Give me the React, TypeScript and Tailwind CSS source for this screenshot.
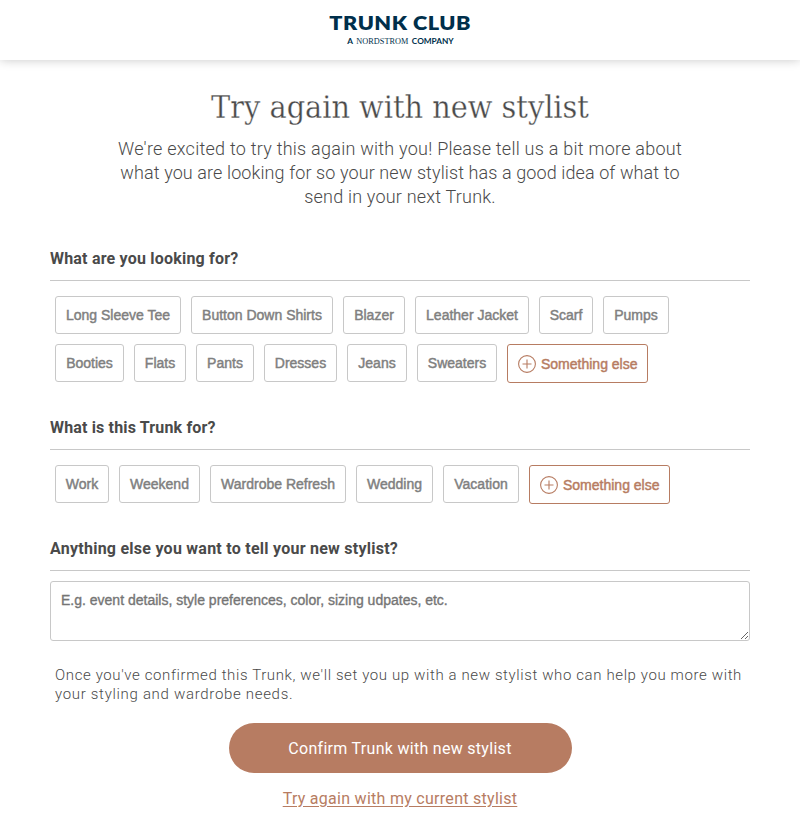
import React from "react";

type Chip = { label: string; width: string };

const items: Chip[][] = [
  [
    { label: "Long Sleeve Tee", width: "w-[126px]" },
    { label: "Button Down Shirts", width: "w-[142px]" },
    { label: "Blazer", width: "w-[62px]" },
    { label: "Leather Jacket", width: "w-[114px]" },
    { label: "Scarf", width: "w-[54px]" },
    { label: "Pumps", width: "w-[66px]" },
  ],
  [
    { label: "Booties", width: "w-[69px]" },
    { label: "Flats", width: "w-[52px]" },
    { label: "Pants", width: "w-[58px]" },
    { label: "Dresses", width: "w-[73px]" },
    { label: "Jeans", width: "w-[60px]" },
    { label: "Sweaters", width: "w-[80px]" },
  ],
];

const occasions: Chip[] = [
  { label: "Work", width: "w-[54px]" },
  { label: "Weekend", width: "w-[81px]" },
  { label: "Wardrobe Refresh", width: "w-[136px]" },
  { label: "Wedding", width: "w-[77px]" },
  { label: "Vacation", width: "w-[76px]" },
];

function ChipButton({ label, width }: Chip) {
  return (
    <button
      className={`${width} h-[38px] shrink-0 whitespace-nowrap rounded-[3px] border border-[#c8c8c8] bg-white text-center text-[14px] leading-[36px] text-[#808080] [-webkit-text-stroke:0.45px_#808080]`}
    >
      {label}
    </button>
  );
}

function SomethingElse() {
  return (
    <button className="flex h-[39px] w-[141px] shrink-0 items-center rounded-[3px] border border-[#b77c62] bg-white pl-[10px] text-[14px] text-[#b77c62] [-webkit-text-stroke:0.45px_#b77c62]">
      <svg width="18" height="18" viewBox="0 0 18 18" fill="none" stroke="#b77c62" className="mr-[5px] shrink-0">
        <circle cx="9" cy="9" r="8.4" strokeWidth="1.1" />
        <path d="M4.5 9h9M9 4.5v9" strokeWidth="1.1" />
      </svg>
      <span className="whitespace-nowrap pt-[2px]">Something else</span>
    </button>
  );
}

function SectionTitle({ children, spacing }: { children: React.ReactNode; spacing: string }) {
  return (
    <h2 className="h-[33px] border-b border-[#c8c8c8] pt-px font-[Roboto,sans-serif] text-[16px] font-bold leading-[20px] text-[#4a4a4a]">
      <span className={spacing}>{children}</span>
    </h2>
  );
}

export default function App() {
  return (
    <div className="h-[833px] w-[800px] overflow-hidden bg-white font-['Liberation_Sans',Arial,sans-serif]">
      <header className="flex h-[60px] flex-col items-center bg-white text-[#002f4b] shadow-[0_0_10px_rgba(0,0,0,0.22)]">
        <div className="mt-[12px] scale-x-[1.14] whitespace-nowrap font-[Lato,sans-serif] text-[19px] font-extrabold leading-[22px]">
          <span className="-mr-[0.5px] tracking-[0.45px]">TRUNK CLUB</span>
        </div>
        <div className="mt-[3px] flex scale-x-[1.1] gap-[3px] whitespace-nowrap font-[Lato,sans-serif] text-[7.5px] font-bold leading-[9px]">
          <span>A</span>
          <span className="font-['Liberation_Serif',serif] font-normal tracking-[0.05px]">NORDSTROM</span>
          <span>COMPANY</span>
        </div>
      </header>

      <main className="px-[50px]">
        <h1 className="mt-[27px] whitespace-nowrap text-center font-['DejaVu_Serif_Condensed','DejaVu_Serif',serif] text-[32px] leading-[40px] text-[#4a4a4a] [-webkit-text-stroke:0.3px_white]">
          <span>Try again with new stylist</span>
        </h1>
        <div className="mt-[10px] flex flex-col items-center whitespace-nowrap font-[Roboto,sans-serif] text-[18px] font-light leading-[24px] text-[#4a4a4a]">
          <p className="tracking-[0.245px]">We're excited to try this again with you! Please tell us a bit more about</p>
          <p className="tracking-[0.1px]">what you are looking for so your new stylist has a good idea of what to</p>
          <p className="tracking-[0.2px]">send in your next Trunk.</p>
        </div>

        <section className="mt-[39px]">
          <SectionTitle spacing="tracking-[0.2px]">What are you looking for?</SectionTitle>
          <div className="ml-[5px] mt-[15px] flex h-[38px] gap-[10px]">
            {items[0].map((chip) => (
              <ChipButton key={chip.label} {...chip} />
            ))}
          </div>
          <div className="ml-[5px] mt-[10px] flex h-[39px] items-start gap-[10px]">
            {items[1].map((chip) => (
              <ChipButton key={chip.label} {...chip} />
            ))}
            <SomethingElse />
          </div>
        </section>

        <section className="mt-[34px]">
          <SectionTitle spacing="tracking-[0.16px]">What is this Trunk for?</SectionTitle>
          <div className="ml-[5px] mt-[15px] flex h-[39px] items-start gap-[10px]">
            {occasions.map((chip) => (
              <ChipButton key={chip.label} {...chip} />
            ))}
            <SomethingElse />
          </div>
        </section>

        <section className="mt-[34px]">
          <SectionTitle spacing="tracking-[0.25px]">Anything else you want to tell your new stylist?</SectionTitle>
          <textarea
            className="mt-[10px] block h-[60px] w-[700px] resize rounded-[3px] border border-[#c8c8c8] px-[10px] py-[8px] text-[14px] leading-[20px] placeholder:text-[#757575] placeholder:[-webkit-text-stroke:0.35px_#757575]"
            placeholder="E.g. event details, style preferences, color, sizing udpates, etc."
          />
        </section>

        <div className="ml-[5px] mt-[25px] whitespace-nowrap font-[Roboto,sans-serif] text-[15px] font-light leading-[19px] text-[#4a4a4a]">
          <p><span className="tracking-[0.615px]">Once you've confirmed this Trunk, we'll set you up with a new stylist who can help you more with</span></p>
          <p><span className="tracking-[0.69px]">your styling and wardrobe needs.</span></p>
        </div>

        <div className="flex flex-col items-center whitespace-nowrap font-[Roboto,sans-serif] text-[16px]">
          <button className="mt-[19px] h-[50px] w-[343px] rounded-full bg-[#b77c62] pt-[2px] text-white">
            <span className="tracking-[0.29px]">Confirm Trunk with new stylist</span>
          </button>
          <a className="mt-[16px] leading-[20px] tracking-[0.28px] text-[#b77c62] underline underline-offset-2">
            Try again with my current stylist
          </a>
        </div>
      </main>
    </div>
  );
}
